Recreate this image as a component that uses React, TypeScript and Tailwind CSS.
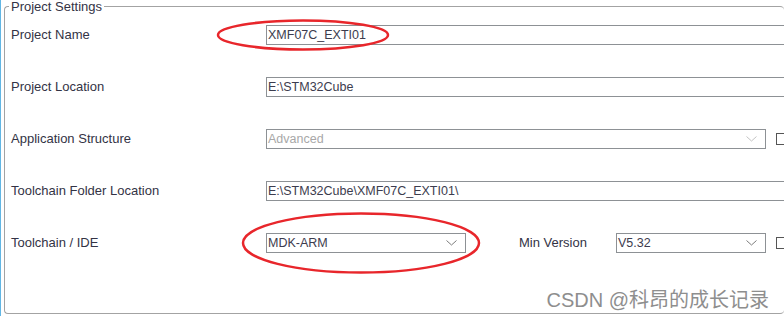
import type { ReactNode } from "react";

const font = { fontFamily: '"Liberation Sans", Arial, sans-serif' };

function Chevron({ disabled }: { disabled?: boolean }) {
  return (
    <svg width="11" height="6" viewBox="0 0 11 6" className="shrink-0">
      <path
        d="M0.5 0.5 L5.5 5 L10.5 0.5"
        fill="none"
        stroke={disabled ? "#c4c4c4" : "#7c7c7c"}
        strokeWidth="1"
      />
    </svg>
  );
}

function TextBox({ value }: { value: string }) {
  return (
    <div className="flex h-[20px] w-[540px] shrink-0 items-center border border-[#8d9195] bg-white pl-[1px] text-[12.5px] text-[#3c3c4e]">
      {value}
    </div>
  );
}

function Select({
  value,
  width,
  disabled,
}: {
  value: string;
  width: string;
  disabled?: boolean;
}) {
  return (
    <div
      className={`flex h-[20px] shrink-0 items-center justify-between border border-[#8d9195] bg-white pl-[1px] pr-[8px] text-[12.5px] ${width} ${
        disabled ? "text-[#a8a8a8]" : "text-[#3c3c4e]"
      }`}
    >
      <span>{value}</span>
      <Chevron disabled={disabled} />
    </div>
  );
}

function Check() {
  return <div className="ml-[10px] h-[12px] w-[12px] shrink-0 border border-[#555]" />;
}

function Row({ label, children }: { label: string; children: ReactNode }) {
  return (
    <div className="flex h-[20px] items-center">
      <div className="w-[255px] shrink-0 text-[13px] text-[#333345]">{label}</div>
      {children}
    </div>
  );
}

export default function App() {
  return (
    <div
      className="relative flex h-[316px] w-[784px] overflow-hidden bg-white"
      style={font}
    >
      <div className="w-[1px] shrink-0 bg-[#62b6e4]" />
      <fieldset className="ml-[3px] h-[314px] min-w-0 flex-1 rounded-[4px] border border-r-0 border-[#a3a3a3] pl-[6px]">
        <legend className="ml-[-2px] px-[2px] text-[13px] leading-[13px] text-[#333345]">
          Project Settings
        </legend>
        <div className="flex flex-col gap-[32px] pt-[12px]">
          <Row label="Project Name">
            <TextBox value="XMF07C_EXTI01" />
          </Row>
          <Row label="Project Location">
            <TextBox value="E:\STM32Cube" />
          </Row>
          <Row label="Application Structure">
            <Select value="Advanced" width="w-[500px]" disabled />
            <Check />
          </Row>
          <Row label="Toolchain Folder Location">
            <TextBox value="E:\STM32Cube\XMF07C_EXTI01\" />
          </Row>
          <Row label="Toolchain / IDE">
            <Select value="MDK-ARM" width="w-[200px]" />
            <div className="ml-[53px] w-[97px] shrink-0 text-[13px] text-[#333345]">
              Min Version
            </div>
            <Select value="V5.32" width="w-[150px]" />
            <Check />
          </Row>
        </div>
      </fieldset>

      <svg
        className="pointer-events-none absolute left-0 top-0"
        width="784"
        height="316"
      >
        <ellipse cx="303" cy="35" rx="85" ry="14.5" fill="none" stroke="#e8262b" strokeWidth="2.5" />
        <ellipse cx="361" cy="243" rx="118" ry="29.5" fill="none" stroke="#e8262b" strokeWidth="2.5" />
      </svg>

      <div
        className="absolute right-[15px] top-[285px] text-[20px] text-[#8e8e8e]"
        style={{
          fontFamily: '"Liberation Sans", Arial, "Noto Sans CJK SC", sans-serif',
          textShadow: "0 0 2px #fff",
        }}
      >
        CSDN @科昂的成长记录
      </div>
    </div>
  );
}
